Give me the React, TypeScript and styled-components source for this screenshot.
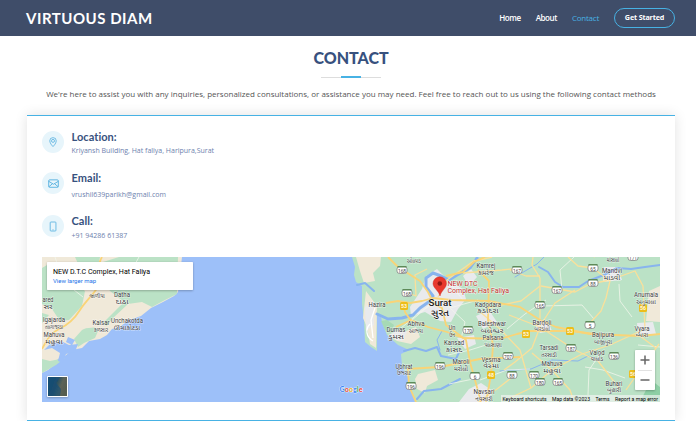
import React from 'react';
import styled, { createGlobalStyle } from 'styled-components';

const Global = createGlobalStyle`
  * { box-sizing: border-box; }
  body { margin: 0; background: #fff; overflow: hidden; font-family: "Open Sans", "Noto Sans", sans-serif; color: #444; }
  h1, h2, h3, p { margin: 0; }
`;

const Header = styled.header`
  height: 36px;
  padding: 0 21px 0 26px;
  display: flex;
  align-items: center;
  justify-content: space-between;
  background: #3f4d69;
`;
const Brand = styled.h1`
  font: 700 15px/36px Lato, sans-serif;
  letter-spacing: 0.52px;
  color: #fff;
`;
const Nav = styled.nav`
  display: flex;
  align-items: center;
`;
const NavLink = styled.a<{ $active?: boolean; $gap: number }>`
  margin-right: ${p => p.$gap}px;
  font-size: 8px;
  line-height: 36px;
  font-weight: ${p => (p.$active ? 400 : 600)};
  letter-spacing: ${p => (p.$active ? -0.25 : -0.42)}px;
  color: ${p => (p.$active ? '#47b2e4' : '#fff')};
`;
const StartButton = styled.a`
  width: 61px;
  height: 20px;
  border: 1px solid #47b2e4;
  border-radius: 10px;
  text-align: center;
  font-size: 7.2px;
  line-height: 17px;
  font-weight: 700;
  letter-spacing: -0.16px;
  color: #fff;
`;

const Section = styled.section`
  width: 648px;
  margin-left: 27px;
  display: flex;
  flex-direction: column;
`;
const Title = styled.h2`
  height: 40px;
  padding-top: 10px;
  text-align: center;
  font: 900 16px/24px Lato, sans-serif;
  letter-spacing: 0;
  color: #37517e;
`;
const Divider = styled.div`
  width: 60px;
  height: 2px;
  margin: 0 auto;
  background: linear-gradient(90deg, transparent 20px, #47b2e4 20px, #47b2e4 40px, transparent 40px),
    linear-gradient(#ddd, #ddd) 0 1px / 100% 1px no-repeat;
`;
const Intro = styled.p`
  margin-top: 9px;
  height: 28px;
  text-align: center;
  white-space: nowrap;
  font-size: 8px;
  line-height: 14px;
  color: #555;
`;
const Card = styled.div`
  height: 306px;
  padding: 0 15px;
  border-top: 1px solid #47b2e4;
  border-bottom: 1px solid #47b2e4;
  background: #fff;
  box-shadow: 0 0 12px rgba(0, 0, 0, 0.12);
`;
const InfoList = styled.div`
  display: grid;
  grid-template-rows: 41px 43px 42px;
  height: 141px;
  padding-top: 15px;
`;
const InfoRow = styled.div`
  display: flex;
  gap: 7.5px;
`;
const IconDisc = styled.span`
  width: 22px;
  height: 22px;
  border-radius: 50%;
  display: grid;
  place-items: center;
  background: #e7f5fb;
`;
const InfoHead = styled.h3`
  font: 700 11px/12px Lato, sans-serif;
  letter-spacing: 0.05px;
  color: #37517e;
`;
const InfoText = styled.p<{ $gap: number; $spacing: number }>`
  margin-top: ${p => p.$gap}px;
  font-size: 7px;
  line-height: 10px;
  letter-spacing: ${p => p.$spacing}px;
  color: #6d81ae;
`;
const MapSvg = styled.svg`
  display: block;
  width: 618px;
  height: 145px;
  font-family: Roboto, "Noto Sans Gujarati", sans-serif;
`;

const PinIcon = () => (
  <svg width="10" height="10" viewBox="0 0 16 16" fill="none" stroke="#47a9dc" strokeWidth="1.15">
    <path d="M8 15.300s5.200-4.900 5.200-9.100A5.200 5.200 0 0 0 8 1a5.200 5.200 0 0 0-5.200 5.200C2.800 10.400 8 15.300 8 15.300z" />
    <circle cx="8" cy="6.200" r="2.400" />
  </svg>
);
const MailIcon = () => (
  <svg width="11" height="11" viewBox="0 0 16 16" fill="none" stroke="#47a9dc" strokeWidth="1.2">
    <rect x="1" y="2.700" width="14" height="10.800" rx="1.500" />
    <path d="M1 4.800l7 4.300 7-4.300M1.200 12.800l5.200-4.400M14.800 12.800L9.600 8.400" />
  </svg>
);
const PhoneIcon = () => (
  <svg width="10" height="11" viewBox="0 0 16 16" fill="none" stroke="#47a9dc" strokeWidth="1.200">
    <rect x="3.500" y="0.800" width="9.200" height="14.400" rx="1.200" />
    <path d="M7.200 13.200h1.600" />
  </svg>
);

const infos = [
  { head: 'Location:', text: 'Kriyansh Building, Hat faliya, Haripura,Surat', gap: 3, spacing: 0, Icon: PinIcon },
  { head: 'Email:', text: 'vrushil639parikh@gmail.com', gap: 6, spacing: 0, Icon: MailIcon },
  { head: 'Call:', text: '+91 94286 61387', gap: 4, spacing: 0, Icon: PhoneIcon },
];

type Place = [string, string, number, number, number];
const places: Place[] = [
  ['', 'જાળીયા', 97, 291, 19], ['Datha', 'દાઠા', 122, 297, 16], ['ared', 'સર', 48, 302, 11],
  ['lgajarda', 'તલગાજરડા', 54, 322, 22], ['Kalsar', 'કળસાર', 101, 325, 17],
  ['Unchakotda', 'ઊંચાકોટડા', 127, 323, 32], ['Mahuva', 'મહુવા', 54, 337, 21],
  ['Hazira', '', 377, 307, 17], ['', 'ઓલપાડ', 414, 256.5, 17], ['Kamrej', 'કામરેજ', 486, 268, 19],
  ['Kadodara', 'કડોદરા', 488, 306.5, 26], ['Abhva', 'આભવા', 416, 326, 17],
  ['Dumas', 'ડુમસ', 396, 332, 19], ['Un', 'ઉન', 452, 330, 7],
  ['Baleshwar', 'બલેશ્વર', 492, 326, 28], ['Palsana', 'પલસાણા', 493, 340, 21],
  ['Kansad', 'કાંસદ', 454, 345, 20], ['Maroli', 'મરોલી', 461, 364, 17],
  ['Vesma', 'વેસ્મા', 491, 361.500, 19], ['Ubhrat', 'ઉભરાટ', 404, 368.500, 17],
  ['Navsari', 'નવસારી', 484, 394, 21], ['Mandvi', 'માંડવી', 612, 273, 20],
  ['Anumala', 'અનુમાલા', 646, 297, 24], ['Bardoli', 'બારડોલી', 542, 324.500, 19],
  ['Tarsadi', 'તરસાડી', 549, 350, 19], ['Mahuva', 'મહુવા', 552, 366, 21],
  ['Valod', 'વાલોડ', 597, 354.500, 15], ['Bajipura', 'બાજીપુરા', 603, 337, 22],
  ['Vyara', 'વ્યારા', 642, 330.500, 15], ['Buhari', 'બુહારી', 614, 385.500, 17],
  ['', 'મોસાલી', 613, 255, 15],
];

type Shield = [string, number, number];
const shields: Shield[] = [
  ['168', 402, 270], ['168', 407, 293], ['167', 517, 270], ['65', 593, 268], ['88', 593, 283],
  ['167', 557, 290], ['165', 540, 305], ['5', 590, 325], ['170', 468, 330], ['196', 440, 366],
  ['6', 475, 376], ['196', 411, 386], ['707', 508, 356], ['88', 512, 375], ['187', 571, 348],
  ['136', 614, 356], ['170', 534, 375], ['180', 540, 382], ['165', 558, 382], ['171', 633, 257],
];
const highways: Shield[] = [['53', 404, 306], ['48', 491, 375], ['53', 526, 334], ['53', 570, 331], ['56', 643, 308], ['56', 633, 374]];

const majorRoads = [
  'M102 257C95 268 104 278 98 287S85 302 80 310S68 325 59 329S46 342 42 349',
  'M386 303L398 301L410 303L422 301L433 298L451 300L489 301L520 307L540 320L556 327L590 334L640 336L660 334',
  'M388 257L397 266L409 274L420 281L428 292L434 304L442 308L446 325L466 340L470 362L475 380L481 402',
  'M478 270L489 281L488 320L493 345L491 375L486 402',
  'M446 276L463 272L474 262L485 257', 'M403 303L405 312L411 321',
  'M396 327L411 320L428 327L447 332L463 338L500 339L517 334L530 331L570 331L595 334',
  'M407 369L440 367L480 359L520 357', 'M408 370L409 386L416 402',
];
const roads = [
  'M533 257L532 265L540 278L540 318L537 326M510 270L526 276L540 276',
  'M541 286L575 292L590 284L610 280L635 271L643 286L645 329',
  'M540 326L555 303L575 290M610 281L606 298L601 311L590 323',
  'M475 261L492 257M475 260L447 280L438 297M463 273L502 270L520 268',
  'M509 315L540 327L575 350L598 361L612 379L620 389M640 336L656 348',
  'M540 327L532 348L515 362L504 370M532 353L552 370L570 390L574 402',
  'M478 402L497 389L515 375M552 370L531 388L510 398M552 370L582 354L610 345L645 329',
  'M595 257L575 250M568 257L578 266L593 268L610 281M406 292L416 296L415 275L427 269',
  'M478 310L500 329L520 350L531 388M487 308L521 301L540 286M626 390L640 370L659 344',
];
const minorRoads = [
  'M574 257L560 270L562 290M541 306L582 305L594 319M619 284L620 301L632 317',
  'M507 329L525 314L546 300M600 354L589 370L588 395M585 367L603 370L625 378M480 380L507 370L530 369',
  'M412 320L432 303M400 329L420 312L434 303M432 280L451 285L463 300M448 306L465 322L461 339M450 308L478 300',
  'M448 355L470 350L486 345M449 384L478 378M55 257L57 263L70 267L71 280M139 257L134 266L103 276M60 267L69 286L83 297M638 345L660 347',
];

const App = () => (
  <>
    <Global />
    <Header>
      <Brand>VIRTUOUS DIAM</Brand>
      <Nav>
        <NavLink $gap={15}>Home</NavLink>
        <NavLink $gap={15}>About</NavLink>
        <NavLink $active $gap={15}>Contact</NavLink>
        <StartButton>Get Started</StartButton>
      </Nav>
    </Header>
    <Section>
      <Title>CONTACT</Title>
      <Divider />
      <Intro>
        We're here to assist you with any inquiries, personalized consultations, or assistance you may need. Feel free to reach out to us using the following contact methods
      </Intro>
      <Card>
        <InfoList>
          {infos.map(({ head, text, gap, spacing, Icon }) => (
            <InfoRow key={head}>
              <IconDisc><Icon /></IconDisc>
              <div>
                <InfoHead>{head}</InfoHead>
                <InfoText $gap={gap} $spacing={spacing}>{text}</InfoText>
              </div>
            </InfoRow>
          ))}
        </InfoList>
        <MapSvg viewBox="42 257 618 145">
          <defs>
            <linearGradient id="sat" x1="0" y1="0" x2="1" y2="0.4">
              <stop offset="0" stopColor="#174c70" /><stop offset="0.5" stopColor="#264f62" /><stop offset="0.75" stopColor="#5c6357" /><stop offset="1" stopColor="#575d50" />
            </linearGradient>
            <filter id="shade" x="-20%" y="-20%" width="140%" height="150%">
              <feDropShadow dx="0" dy="0.700" stdDeviation="0.900" floodOpacity="0.3" />
            </filter>
          </defs>
          <rect x="42" y="257" width="618" height="145" fill="#9dc0f9" />
          <path fill="#f0e9d9" d="M42 257H182L178 292L174 296L163 302L151 308L141 316L129 320L121 326L112 329L107 335L100 339L89 341L82 348L72 350L65 356L58 359L53 366L48 370L42 373Z" />
          <g fill="#bbe2c6">
            <path d="M42 268L52 262L69 279L85 291L82 306L69 320L60 321L52 309L42 304Z" />
            <path d="M75 257H100L96 279L86 281ZM103 262L119 257H178L177 294L163 301L152 307L142 302L128 304L113 318L107 326L97 321L99 304L110 291L103 281Z" />
            <path d="M90 326L99 329L95 338L84 343L78 347L74 339L82 330ZM42 359L50 361L65 358L56 365L42 373ZM42 313L49 315L42 323Z" />
          </g>
          <path fill="#f0e9d9" d="M110 291L124 302L112 314L99 327L78 329L74 321L85 300L95 289Z" />
          <path fill="#9dc0f9" d="M61 341L69 345L78 344L75 352L66 354L63 363L58 361L60 353L52 348L44 350L50 344ZM68 337L75 340L72 345L66 342Z" />
          <path fill="#bbe2c6" d="M352 257H660V402H415L411 388L407 375L402 366L401 354L409 350L398 345L387 335L383 325L381 317L377 314L377 351L371 347L365 342L364 320L362 304L362 286L356 282L354 275L355 267Z" />
          <path fill="#f0e9d9" d="M356 257H381L380 266L373 273L375 281L364 283L360 271ZM366 291L377 306L376 348L370 344L367 327L363 318ZM391 337L416 327L420 337L411 344L397 341ZM418 374L435 370L438 380L427 386L425 393L417 389L415 379Z" />
          <path fill="#f0e9d9" d="M649 291L660 286V322L646 321Z" />
          <g fill="#e9eaed">
            <path d="M422 289L426 276L437 269L446 278L463 289L466 299L458 309L451 322L440 321L425 312L411 316L410 307Z" />
            <path d="M463 276L471 269L477 277L469 286ZM457 338L474 335L476 344L465 349ZM399 330L407 332L402 341L394 339L388 335ZM476 316L489 310L497 322L483 329ZM469 389L481 383L493 391L488 402H459ZM533 321L548 321L552 331L540 333ZM604 267L618 267L622 280L603 282ZM637 323L653 322L656 334L638 334ZM365 307L373 301L374 325L366 331Z" />
          </g>
          <path fill="#a6d9b5" d="M381 321L387 320L394 325L391 332L385 330Z" />
          <path fill="#8dcfa5" d="M651 380L660 387V402H640Z" />
          <g fill="none" stroke="#88b4ee" strokeLinejoin="round" strokeLinecap="round">
            <path strokeWidth="3" d="M377 314L388 319L402 318L413 315L420 308L430 301L433 296L426 287L426 278L433 273L441 276L449 280L457 275L470 268L477 258" />
            <path strokeWidth="2" d="M539 267L548 272L555 282L563 287L579 287L588 281L604 275L617 268L631 269L645 267L660 265M404 351L415 348L426 351L437 347L441 356L456 359L459 352M417 399L424 391L441 389L460 379M357 285L365 283L374 291" />
            <path strokeWidth="1" d="M440 350L437 340L442 331M515 277L537 264L544 257M552 360L578 361L588 356L598 360M500 371L531 369L552 360" />
          </g>
          <path d="M370 324C365 329 366 337 373 341M375 308L371 320L373 338" fill="none" stroke="#fff" strokeWidth="1.300" />
          <g fill="none" stroke="#f3f6ec" strokeWidth="0.800" strokeLinejoin="round">
            {minorRoads.map(d => <path key={d} d={d} />)}
          </g>
          <g fill="none" stroke="#fae09a" strokeWidth="1.300" strokeLinejoin="round">
            {roads.map(d => <path key={d} d={d} />)}
          </g>
          <g fill="none" stroke="#f9d477" strokeWidth="1.800" strokeLinejoin="round">
            {majorRoads.map(d => <path key={d} d={d} />)}
          </g>
          {shields.map(([n, x, y]) => (
            <g key={n + x}>
              <rect x={x - 5} y={y - 3.5} width="10" height="7" rx="2.500" fill="#fff" stroke="#777" strokeWidth="0.700" />
              <rect x={x - 4.5} y={y - 4} width="9" height="1.500" fill="#5d8a58" />
              <text x={x} y={y + 2.5} fontSize="4.800" textAnchor="middle" fill="#444">{n}</text>
            </g>
          ))}
          {highways.map(([n, x, y]) => (
            <g key={n + x}>
              <rect x={x - 4} y={y - 4} width="8" height="8" rx="1.500" fill="#ecbd1a" />
              <text x={x} y={y + 2} fontSize="5.200" fontWeight="700" textAnchor="middle" fill="#fff8e0">{n}</text>
            </g>
          ))}
          <g textAnchor="middle" fill="#3f4144" stroke="#fff" strokeWidth="1" strokeOpacity="0.6" paintOrder="stroke" fontSize="6.500">
            {places.map(([en, gu, x, y, w]) => (
              <g key={en + gu + x}>
                {en && <text x={x} y={y} textLength={w} lengthAdjust="spacingAndGlyphs">{en}</text>}
                {gu && <text x={x} y={y + 6.5} fontSize="5.800" textLength={w * 0.82} lengthAdjust="spacingAndGlyphs">{gu}</text>}
              </g>
            ))}
            <text x="440" y="306" fontSize="9" fontWeight="500" fill="#222" textLength="23" lengthAdjust="spacingAndGlyphs">Surat</text>
            <text x="440" y="315.500" fontSize="9" fontWeight="500" fill="#222" textLength="18" lengthAdjust="spacingAndGlyphs">સુરત</text>
          </g>
          <path d="M440 296C439 291 433 288 433 283.500A6.700 6.700 0 0 1 446.500 283.500C446.500 288 441 291 440 296Z" fill="#e8382d" stroke="#c5221f" strokeWidth="0.400" />
          <circle cx="439.800" cy="283.500" r="2.300" fill="#8f1712" />
          <g fill="#c5322c" stroke="#fff" strokeWidth="1" strokeOpacity="0.7" paintOrder="stroke" fontSize="6.800">
            <text x="447.500" y="285.500" textLength="30" lengthAdjust="spacingAndGlyphs">NEW DTC</text>
            <text x="447.500" y="292.500" textLength="61.500" lengthAdjust="spacingAndGlyphs">Complex, Hat Faliya</text>
          </g>
          <rect x="47" y="262" width="146" height="28" rx="0.700" fill="#fff" filter="url(#shade)" />
          <text x="53" y="274" fontSize="7" fill="#000" textLength="97" lengthAdjust="spacingAndGlyphs">NEW D.T.C Complex, Hat Faliya</text>
          <text x="53" y="283.300" fontSize="6" fill="#1a73e8" textLength="43" lengthAdjust="spacingAndGlyphs">View larger map</text>
          <g filter="url(#shade)">
            <rect x="47" y="376" width="21" height="21" rx="1" fill="#fff" />
            <rect x="48" y="377" width="19" height="19" fill="url(#sat)" />
            <path d="M48 377H60L56 383L61 389L60 396H48Z" fill="#164f78" opacity="0.65" />
          </g>
          <text x="339.500" y="391.500" fontFamily="Lato" fontSize="7.200" fontWeight="700" stroke="#fff" strokeWidth="0.700" paintOrder="stroke" textLength="23">
            <tspan fill="#4285f4">G</tspan><tspan fill="#ea4335">o</tspan><tspan fill="#f4b400">o</tspan><tspan fill="#4285f4">g</tspan><tspan fill="#34a853">l</tspan><tspan fill="#ea4335">e</tspan>
          </text>
          <rect x="501" y="395" width="159" height="7" fill="#f5f5f5" opacity="0.65" />
          <g fontSize="5.300" fill="#000">
            <text x="502.500" y="400.500" textLength="44" lengthAdjust="spacingAndGlyphs">Keyboard shortcuts</text>
            <text x="552" y="400.500" textLength="38" lengthAdjust="spacingAndGlyphs">Map data ©2023</text>
            <text x="595.500" y="400.500" textLength="14" lengthAdjust="spacingAndGlyphs">Terms</text>
            <text x="615" y="400.500" textLength="43" lengthAdjust="spacingAndGlyphs">Report a map error</text>
          </g>
          <rect x="635" y="350" width="20" height="40" rx="1" fill="#fff" filter="url(#shade)" />
          <path d="M638 370.500H652" stroke="#e2e2e2" />
          <path d="M640.500 360H649.500M645 355.500V364.500M640.500 380H649.500" stroke="#666" strokeWidth="1.500" />
        </MapSvg>
      </Card>
    </Section>
  </>
);

export default App;
